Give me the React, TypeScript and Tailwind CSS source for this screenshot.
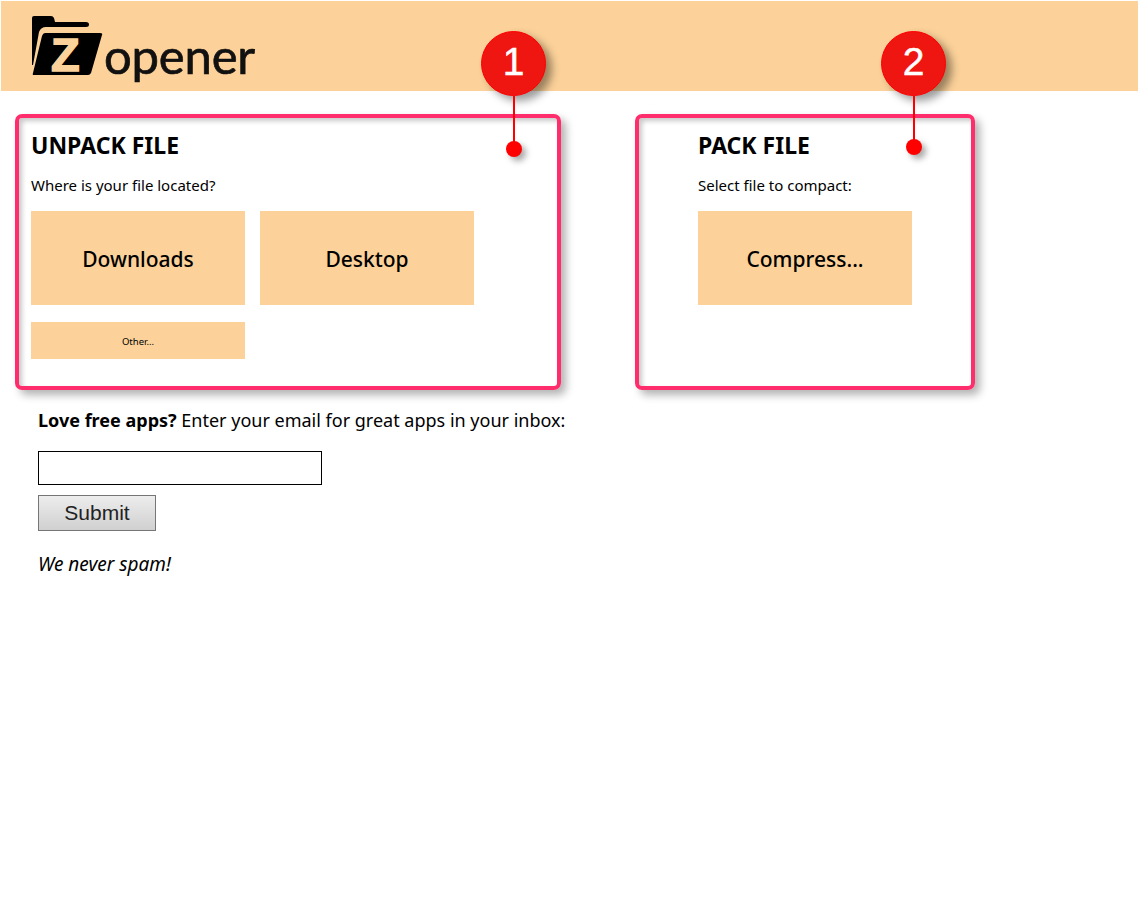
const font = "font-['Noto_Sans','Open_Sans',sans-serif]";

const Logo = () => (
  <div className="flex items-end">
    <svg width="72" height="68" viewBox="0 0 72 68" className="mb-[-5px]">
      <path d="M1 3 Q1 1 3 1 L20 1 Q22 1 23 3 L24 7 L55 7 Q58 7 58 9.5 Q58 12 55 12 L15 12 Q10 12 8 17 L2 50 L1 50 Z" fill="#000" />
      <path d="M14 18 L69 18 Q72 18 71 20 L60 58 Q59 60 57 60 L3 60 Q1 60 2 58 L11 21 Q12 18 14 18 Z" fill="#000" />
      <text x="20" y="56" fontFamily="'Liberation Sans', sans-serif" fontWeight="700" fontSize="47" fill="#fcd29a" stroke="#fcd29a" strokeWidth="1.5">Z</text>
    </svg>
    <span className="ml-[1px] mb-[-5px] font-['Lato',sans-serif] text-[49px] leading-[56px] tracking-[-0.2px] text-[#111] [-webkit-text-stroke:0.7px_#111]">opener</span>
  </div>
);

const Tile = ({ children, small }: { children: string; small?: boolean }) => (
  <button
    className={
      small
        ? "flex h-[37px] w-[214px] items-center justify-center bg-[#fcd29a] pt-[4px] text-[9.5px] text-black"
        : "flex h-[94px] w-[214px] items-center justify-center bg-[#fcd29a] pt-[4px] text-[21px] font-medium text-black"
    }
  >
    {children}
  </button>
);

const Pin = ({ label, className, lineClass }: { label: string; className: string; lineClass: string }) => (
  <div className={`absolute top-[30px] flex w-[65px] flex-col items-center ${className}`}>
    <div className="flex h-[65px] w-[65px] items-center justify-center rounded-full border border-[#ff0000] bg-[#ef1510] pb-[2px] font-['Liberation_Sans',sans-serif] text-[39px] text-white shadow-[6px_5px_9px_rgba(0,0,0,0.4)] [-webkit-text-stroke:0.5px_#fff]">
      {label}
    </div>
    <div className={`w-[2px] bg-[#ff0000] ${lineClass}`} />
    <div className="mt-[-1px] h-4 w-4 rounded-full bg-[#ff0000] shadow-[4px_4px_6px_rgba(0,0,0,0.35)]" />
  </div>
);

export default function App() {
  return (
    <div className={`relative min-h-[900px] bg-white text-black ${font}`}>
      <header className="ml-[1px] flex h-[90px] items-start bg-[#fcd29a] pl-[30px] pt-[14px] [margin-top:1px]">
        <Logo />
      </header>

      <main className="flex items-start gap-[74px] pl-[15px] pt-[23px]">
        <section className="h-[276px] w-[546px] rounded-[7px] border-4 border-[#ff2d6b] pl-[12px] pt-[12px] shadow-[5px_5px_8px_rgba(0,0,0,0.3),inset_3px_3px_5px_rgba(0,0,0,0.22)]">
          <h2 className="text-[23px] font-bold leading-[30px]">UNPACK FILE</h2>
          <p className="mt-[15px] text-[15px] leading-[20px]">Where is your file located?</p>
          <div className="mt-[16px] flex gap-[15px]">
            <Tile>Downloads</Tile>
            <Tile>Desktop</Tile>
          </div>
          <div className="mt-[17px]">
            <Tile small>Other...</Tile>
          </div>
        </section>

        <section className="h-[276px] w-[340px] rounded-[7px] border-4 border-[#ff2d6b] pl-[59px] pt-[12px] shadow-[5px_5px_8px_rgba(0,0,0,0.3),inset_3px_3px_5px_rgba(0,0,0,0.22)]">
          <h2 className="text-[23px] font-bold leading-[30px]">PACK FILE</h2>
          <p className="mt-[15px] text-[15px] leading-[20px]">Select file to compact:</p>
          <div className="mt-[16px]">
            <Tile>Compress...</Tile>
          </div>
        </section>
      </main>

      <form className="pl-[38px] pt-[17px]">
        <p className="text-[18px] leading-[26px]">
          <strong>Love free apps?</strong> Enter your email for great apps in your inbox:
        </p>
        <input type="text" className="mt-[18px] block h-[34px] w-[284px] border border-black" />
        <button
          type="button"
          className="mt-[10px] block h-[36px] w-[118px] border border-[#767676] bg-gradient-to-b from-[#ededed] to-[#d0d0d0] font-['Liberation_Sans',sans-serif] text-[21px] text-[#222]"
        >
          Submit
        </button>
        <p className="mt-[20px] text-[19px] italic leading-[26px]">We never spam!</p>
      </form>

      <Pin label="1" className="left-[481px]" lineClass="h-[46px]" />
      <Pin label="2" className="left-[881px]" lineClass="h-[44px]" />
    </div>
  );
}
